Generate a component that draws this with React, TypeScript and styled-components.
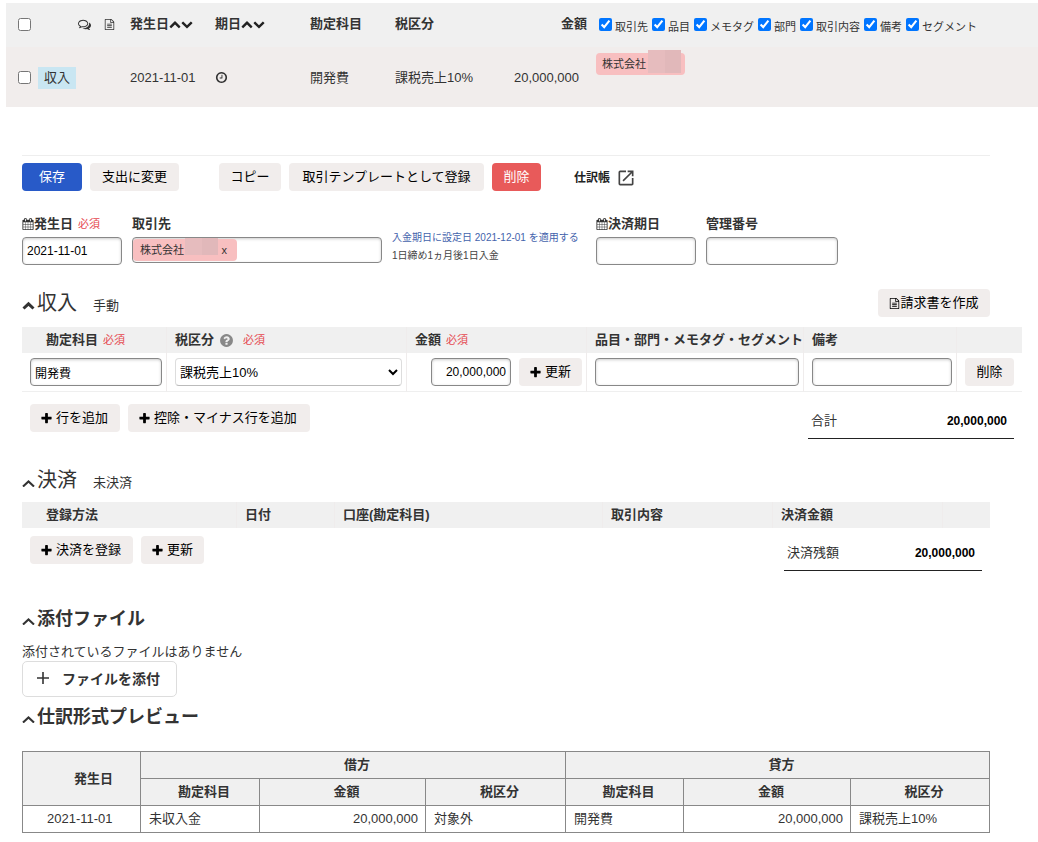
import React from 'react';
import styled, { createGlobalStyle, css } from 'styled-components';

const sans = '"Liberation Sans", "Noto Sans CJK JP", sans-serif';

const GlobalStyle = createGlobalStyle`
  *, *::before, *::after { box-sizing: border-box; }
  body {
    margin: 0;
    background: #fff;
    color: #333;
    font-family: ${sans};
    font-size: 13px;
    line-height: 20px;
  }
  button, input, select { font-family: inherit; }
  table { border-collapse: collapse; border-spacing: 0; }
  th, td { padding: 0; text-align: left; }
  h2, p { margin: 0; }
  svg { display: block; flex: none; }
`;

/* ---------- icons ---------- */

const paths = {
  up: 'M1683 1331l-166 165q-19 19-45 19t-45-19l-531-531-531 531q-19 19-45 19t-45-19l-166-165q-19-19-19-45.5t19-45.5l742-741q19-19 45-19t45 19l742 741q19 19 19 45.5t-19 45.5z',
  down: 'M1683 808l-742 741q-19 19-45 19t-45-19l-742-741q-19-19-19-45.5t19-45.5l166-165q19-19 45-19t45 19l531 531 531-531q19-19 45-19t45 19l166 165q19 19 19 45.5t-19 45.5z',
  plus: 'M1600 736v192q0 40-28 68t-68 28h-416v416q0 40-28 68t-68 28h-192q-40 0-68-28t-28-68v-416h-416q-40 0-68-28t-28-68v-192q0-40 28-68t68-28h416v-416q0-40 28-68t68-28h192q40 0 68 28t28 68v416h416q40 0 68 28t28 68z',
  clock:
    'M1024 544v448q0 14-9 23t-23 9h-320q-14 0-23-9t-9-23v-64q0-14 9-23t23-9h224v-352q0-14 9-23t23-9h64q14 0 23 9t9 23zm416 352q0-148-73-273t-198-198-273-73-273 73-198 198-73 273 73 273 198 198 273 73 273-73 198-198 73-273zm224 0q0 209-103 385.5t-279.5 279.5-385.5 103-385.5-103-279.5-279.5-103-385.5 103-385.5 279.5-279.5 385.5-103 385.5 103 279.5 279.5 103 385.5z',
  question:
    'M1024 1376v-192q0-14-9-23t-23-9h-192q-14 0-23 9t-9 23v192q0 14 9 23t23 9h192q14 0 23-9t9-23zm256-672q0-88-55.5-163t-138.5-116-170-41q-243 0-371 213-15 24 8 42l132 100q7 6 19 6 16 0 25-12 53-68 86-92 34-24 86-24 48 0 85.5 26t37.5 59q0 38-20 61t-68 45q-63 28-115.5 86.5t-52.5 125.5v36q0 14 9 23t23 9h192q14 0 23-9t9-23q0-19 21.5-49.5t54.5-49.5q32-18 49-28.5t46-35 44.5-48 28-60.5 12.5-81zm384 192q0 209-103 385.5t-279.5 279.5-385.5 103-385.5-103-279.5-279.5-103-385.5 103-385.5 279.5-279.5 385.5-103 385.5 103 279.5 279.5 103 385.5z',
  calendar:
    'M192 1664h288v-288h-288v288zm352 0h320v-288h-320v288zm-352-352h288v-320h-288v320zm352 0h320v-320h-320v320zm-352-384h288v-288h-288v288zm736 736h320v-288h-320v288zm-384-736h320v-288h-320v288zm768 736h288v-288h-288v288zm-384-352h320v-320h-320v320zm-352-864v-288q0-13-9.5-22.5t-22.5-9.5h-64q-13 0-22.5 9.5t-9.5 22.5v288q0 13 9.5 22.5t22.5 9.5h64q13 0 22.5-9.5t9.5-22.5zm736 864h288v-320h-288v320zm-384-384h320v-288h-320v288zm384 0h288v-288h-288v288zm32-480v-288q0-13-9.5-22.5t-22.5-9.5h-64q-13 0-22.5 9.5t-9.5 22.5v288q0 13 9.5 22.5t22.5 9.5h64q13 0 22.5-9.5t9.5-22.5zm384-64v1280q0 52-38 90t-90 38h-1408q-52 0-90-38t-38-90v-1280q0-52 38-90t90-38h128v-96q0-66 47-113t113-47h64q66 0 113 47t47 113v96h384v-96q0-66 47-113t113-47h64q66 0 113 47t47 113v96h128q52 0 90 38t38 90z',
  file: 'M1596 380q28 28 48 76t20 88v1152q0 40-28 68t-68 28h-1344q-40 0-68-28t-28-68v-1600q0-40 28-68t68-28h896q40 0 88 20t76 48zm-444-244v376h376q-10-29-22-41l-313-313q-12-12-41-22zm384 1528v-1024h-416q-40 0-68-28t-28-68v-416h-768v1536h1280zm-1024-864q0-14 9-23t23-9h704q14 0 23 9t9 23v64q0 14-9 23t-23 9h-704q-14 0-23-9t-9-23v-64zm736 224q14 0 23 9t9 23v64q0 14-9 23t-23 9h-704q-14 0-23-9t-9-23v-64q0-14 9-23t23-9h704zm0 256q14 0 23 9t9 23v64q0 14-9 23t-23 9h-704q-14 0-23-9t-9-23v-64q0-14 9-23t23-9h704z',
  comments:
    'M704 384q-153 0-286 52t-211.5 141-78.5 191q0 82 53 158t149 132l97 56-35 84q34-20 62-39l44-31 53 10q78 14 153 14 153 0 286-52t211.5-141 78.5-191-78.5-191-211.5-141-286-52zm0-128q191 0 353.5 68.5t256.5 186.5 94 257-94 257-256.5 186.5-353.5 68.5q-86 0-176-16-124 88-278 128-36 9-86 16h-3q-11 0-20.5-8t-11.5-21q-1-3-1-6.5t.5-6.5 2-6l2.5-5 3.5-5.5 4-5 4.5-5 4-4.5q5-6 23-25t26-29.5 22.5-29 25-38.5 20.5-44q-124-72-195-177t-71-224q0-139 94-257t256.5-186.5 353.5-68.5zm822 1169q10 24 20.5 44t25 38.5 22.5 29 26 29.5 23 25q1 1 4 4.5t4.5 5 4 5 3.5 5.5l2.5 5 2 6 .5 6.5-1 6.5q-3 14-13 22t-22 7q-50-7-86-16-154-40-278-128-90 16-176 16-271 0-472-132 58 4 88 4 161 0 309-45t264-129q125-92 192-212t67-254q0-77-23-152 129 71 204 178t75 230q0 120-71 224.5t-195 176.5z',
};

const Icon = ({ name, size = 13, color = 'currentColor' }: { name: keyof typeof paths; size?: number; color?: string }) => (
  <svg width={size} height={size} viewBox="0 0 1792 1792" fill={color} aria-hidden="true">
    <path d={paths[name]} />
  </svg>
);

const Fold = ({ heavy }: { heavy?: boolean }) => (
  <svg width="14" height="9" viewBox="0 0 14 9" fill="none" stroke="#333" strokeWidth={heavy ? 3 : 2} aria-hidden="true">
    <path d={heavy ? 'M1.5 7.5 L6.5 2.8 L11.5 7.5' : 'M1 8.6 L6.5 3.4 L12 8.6'} />
  </svg>
);

const OpenIcon = () => (
  <svg width="20" height="20" viewBox="0 0 24 24" fill="#444" aria-hidden="true">
    <path d="M19 19H5V5h7V3H5a2 2 0 0 0-2 2v14a2 2 0 0 0 2 2h14c1.1 0 2-.9 2-2v-7h-2v7zM14 3v2h3.59l-9.83 9.83 1.41 1.41L19 6.41V10h2V3h-7z" />
  </svg>
);

/* ---------- shared controls ---------- */

type Tone = 'plain' | 'primary' | 'danger';

const tones: Record<Tone, ReturnType<typeof css>> = {
  plain: css`background: #f1edec; color: #000;`,
  primary: css`background: #285ac8; color: #fff;`,
  danger: css`background: #e85a5a; color: #fff;`,
};

const Button = styled.button<{ $tone?: Tone; $w: number }>`
  display: flex;
  align-items: center;
  justify-content: center;
  flex: none;
  width: ${p => p.$w}px;
  height: 28px;
  padding: 0;
  border: 0;
  border-radius: 4px;
  font-size: 13px;
  line-height: 20px;
  white-space: nowrap;
  ${p => tones[p.$tone ?? 'plain']}
`;

const PlusButton = styled(Button)`
  justify-content: flex-start;
  gap: 3px;
  padding-left: 10px;
`;

const TextInput = styled.input<{ $w?: number; $align?: string }>`
  display: block;
  width: ${p => (p.$w ? `${p.$w}px` : '100%')};
  height: 28px;
  padding: 0 4px;
  border: 1px solid #888;
  border-radius: 4px;
  background: #fff;
  box-shadow: inset 0 1px 3px #ccc;
  color: #000;
  font-size: 12px;
  text-align: ${p => p.$align ?? 'left'};
`;

const Required = styled.span`
  color: #e5484f;
  font-size: 11px;
  font-weight: 400;
`;

const Redacted = styled.span<{ $left: number; $top: number; $h: number }>`
  position: absolute;
  left: ${p => p.$left}px;
  top: ${p => p.$top}px;
  width: 33px;
  height: ${p => p.$h}px;
  background: linear-gradient(90deg, #e6bcbe 0 50%, #e1b8ba 50% 100%);
`;

/* ---------- transaction list ---------- */

const List = styled.div`
  margin: 3px 0 0 6px;
`;

const ListTable = styled.table`
  width: 100%;
  table-layout: fixed;
  th { height: 44px; padding-bottom: 2px; background: #f0f0f0; }
  td { height: 60px; padding-top: 1px; background: #f1edec; }
`;

const Check = styled.input`
  display: block;
  flex: none;
  width: 13px;
  height: 13px;
  margin: 0;
`;

const SelectCell = styled.div`
  padding-left: 12px;
`;

const Badge = styled.span`
  display: inline-block;
  padding: 1px 6px;
  background: #c9e6f2;
`;

const Sortable = styled.div`
  display: flex;
  align-items: center;
`;

const AmountHead = styled.th`
  && { text-align: right; padding-right: 1px; }
`;

const AmountCell = styled.td`
  && { text-align: right; padding-right: 9px; }
`;

const Filters = styled.div`
  display: flex;
  align-items: center;
  gap: 4px;
  padding-left: 11px;
`;

const Filter = styled.label`
  display: flex;
  align-items: center;
  gap: 3px;
  font-size: 11px;
  font-weight: 400;
  white-space: nowrap;
  span { padding-top: 5px; }
`;

const TagCell = styled.td`
  && { vertical-align: top; padding: 6px 0 0 8px; }
`;

const Tag = styled.span`
  position: relative;
  display: block;
  width: 89px;
  height: 22px;
  padding-left: 6px;
  border-radius: 4px;
  background: #f8bfc0;
  font-size: 11px;
  line-height: 22px;
`;

/* ---------- detail form ---------- */

const Main = styled.main`
  padding: 48px 16px 9px 22px;
`;

const Narrow = styled.div`
  margin-right: 32px;
`;

const Toolbar = styled.div`
  display: flex;
  gap: 8px;
  padding-top: 7px;
  border-top: 1px solid #eee;
`;

const Gap = styled.span`
  width: 24px;
`;

const JournalLink = styled.a`
  display: flex;
  align-items: center;
  gap: 6px;
  margin-left: 25px;
  padding-top: 2px;
  color: #222;
  font-size: 12px;
  font-weight: 700;
  text-decoration: none;
`;

const Fields = styled.div`
  display: flex;
  gap: 10px;
  margin-top: 25px;
`;

const Field = styled.div<{ $w: number }>`
  width: ${p => p.$w}px;
`;

const Label = styled.label`
  display: flex;
  align-items: center;
  height: 16px;
  margin-bottom: 5px;
  font-weight: 700;
  white-space: nowrap;
  ${Required} { margin-left: 5px; }
`;

const ChipBox = styled.div`
  display: flex;
  height: 26px;
  padding: 1px 0;
  border: 1px solid #888;
  border-radius: 4px;
  box-shadow: inset 0 1px 3px #ccc;
  input { flex: 1; min-width: 0; border: 0; background: none; }
`;

const Chip = styled.span`
  position: relative;
  display: flex;
  justify-content: space-between;
  width: 104px;
  padding: 0 10px 0 7px;
  border-radius: 4px;
  background: #f8bfc0;
  font-size: 11px;
  line-height: 22px;
  button { padding: 0; border: 0; background: none; color: #333; font-size: 11px; line-height: 22px; }
`;

const Notice = styled.div`
  display: flex;
  flex-direction: column;
  width: 194px;
  padding-top: 13px;
  color: #444;
  font-size: 10px;
  line-height: 18px;
  white-space: nowrap;
  a { color: #4463ac; text-decoration: none; }
`;

const SectionHead = styled.div<{ $top: number; $gap?: number }>`
  display: flex;
  justify-content: space-between;
  align-items: center;
  height: 28px;
  margin: ${p => p.$top}px 0 ${p => p.$gap ?? 10}px;
`;

const TitleRow = styled.div`
  display: flex;
  align-items: baseline;
`;

const Title = styled.h2<{ $size: number; $bold?: boolean }>`
  display: flex;
  align-items: baseline;
  gap: 1px;
  font-size: ${p => p.$size}px;
  line-height: 26px;
  font-weight: ${p => (p.$bold ? 700 : 400)};
`;

const Status = styled.span`
  margin-left: 16px;
`;

const LineTable = styled.table`
  width: 100%;
  table-layout: fixed;
  border-collapse: separate;
  th {
    height: 26px;
    padding-left: 8px;
    background: #f0f0f0;
    border-right: 1px solid #efecec;
    white-space: nowrap;
  }
  th:first-child { padding-left: 24px; }
  td {
    padding: 5px 4px 5px 8px;
    border-right: 1px solid #efecec;
    border-bottom: 1px solid #efefef;
  }
  th:last-child, td:last-child { border-right: 0; }
`;

const HeadText = styled.div`
  display: flex;
  align-items: center;
  gap: 5px;
`;

const Help = styled.button`
  display: block;
  margin-right: 4px;
  padding: 0;
  border: 0;
  background: none;
`;

const TaxSelect = styled.select`
  display: block;
  width: 100%;
  height: 28px;
  padding: 0;
  border: 1px solid #ddd;
  border-bottom-color: #bbb;
  border-radius: 4px;
  background: #fff;
  color: #000;
  font-size: 13px;
`;

const AmountEdit = styled.div`
  display: flex;
  justify-content: flex-end;
  gap: 8px;
`;

const Footer = styled.div<{ $top: number }>`
  display: flex;
  gap: 8px;
  margin: ${p => p.$top}px 8px 0;
`;

const Total = styled.div<{ $w: number }>`
  display: flex;
  justify-content: space-between;
  align-items: center;
  width: ${p => p.$w}px;
  height: 35px;
  margin-left: auto;
  padding: 0 7px 0 3px;
  border-bottom: 1px solid #222;
  strong { color: #000; font-size: 12px; }
`;

const Empty = styled.p`
  line-height: 19px;
`;

const AttachButton = styled.button`
  display: flex;
  align-items: center;
  gap: 12px;
  width: 155px;
  height: 36px;
  padding: 0 13px 2px;
  border: 1px solid #ddd;
  border-radius: 5px;
  background: #fff;
  color: #333;
  font-size: 14px;
  font-weight: 700;
  white-space: nowrap;
`;

const Preview = styled.table`
  width: 100%;
  table-layout: fixed;
  th, td {
    height: 27px;
    padding-left: 8px;
    border: 1px solid #888;
  }
  th { background: #f0f0f0; text-align: center; }
  tr:first-child th:first-child, td:first-child { padding-left: 24px; }
`;

const NumberCell = styled.td`
  && { text-align: right; padding-right: 7px; }
`;

const filters = ['取引先', '品目', 'メモタグ', '部門', '取引内容', '備考', 'セグメント'];

const SortHead = ({ children }: { children: React.ReactNode }) => (
  <Sortable>
    {children}
    <Icon name="up" size={12} color="#222" />
    <Icon name="down" size={12} color="#222" />
  </Sortable>
);

const Cols = ({ widths }: { widths: (number | null)[] }) => (
  <colgroup>
    {widths.map((w, i) => (
      <col key={i} width={w ?? undefined} />
    ))}
  </colgroup>
);

export default function App() {
  return (
    <>
      <GlobalStyle />
      <List>
        <ListTable>
          <Cols widths={[32, 40, 26, 26, 85, 95, 85, 85, 108, null]} />
          <thead>
            <tr>
              <th><SelectCell><Check type="checkbox" aria-label="すべて選択" /></SelectCell></th>
              <th />
              <th><Icon name="comments" size={13} /></th>
              <th><Icon name="file" size={11} /></th>
              <th><SortHead>発生日</SortHead></th>
              <th><SortHead>期日</SortHead></th>
              <th>勘定科目</th>
              <th>税区分</th>
              <AmountHead>金額</AmountHead>
              <th>
                <Filters>
                  {filters.map(f => (
                    <Filter key={f}>
                      <Check type="checkbox" defaultChecked />
                      <span>{f}</span>
                    </Filter>
                  ))}
                </Filters>
              </th>
            </tr>
          </thead>
          <tbody>
            <tr>
              <td><SelectCell><Check type="checkbox" aria-label="選択" /></SelectCell></td>
              <td><Badge>収入</Badge></td>
              <td />
              <td />
              <td>2021-11-01</td>
              <td><Icon name="clock" size={13} /></td>
              <td>開発費</td>
              <td>課税売上10%</td>
              <AmountCell>20,000,000</AmountCell>
              <TagCell>
                <Tag>株式会社<Redacted $left={52} $top={-3} $h={23} /></Tag>
              </TagCell>
            </tr>
          </tbody>
        </ListTable>
      </List>

      <Main>
        <Narrow>
          <Toolbar>
            <Button $w={60} $tone="primary">保存</Button>
            <Button $w={89}>支出に変更</Button>
            <Gap />
            <Button $w={62}>コピー</Button>
            <Button $w={195}>取引テンプレートとして登録</Button>
            <Button $w={49} $tone="danger">削除</Button>
            <JournalLink href="#journal">仕訳帳<OpenIcon /></JournalLink>
          </Toolbar>

          <Fields>
            <Field $w={100}>
              <Label htmlFor="date"><Icon name="calendar" size={12} />発生日<Required>必須</Required></Label>
              <TextInput id="date" defaultValue="2021-11-01" />
            </Field>
            <Field $w={250}>
              <Label htmlFor="partner">取引先</Label>
              <ChipBox>
                <Chip>
                  株式会社
                  <Redacted $left={52} $top={-1} $h={17} />
                  <button aria-label="取引先を外す">x</button>
                </Chip>
                <input id="partner" />
              </ChipBox>
            </Field>
            <Notice>
              <a href="#due">入金期日に設定日 2021-12-01 を適用する</a>
              <span>1日締め1ヵ月後1日入金</span>
            </Notice>
            <Field $w={100}>
              <Label htmlFor="due"><Icon name="calendar" size={12} />決済期日</Label>
              <TextInput id="due" />
            </Field>
            <Field $w={132}>
              <Label htmlFor="number">管理番号</Label>
              <TextInput id="number" />
            </Field>
          </Fields>

          <SectionHead $top={24}>
            <TitleRow>
              <Title $size={20}><Fold heavy />収入</Title>
              <Status>手動</Status>
            </TitleRow>
            <Button $w={112}><Icon name="file" size={11} />請求書を作成</Button>
          </SectionHead>
        </Narrow>

        <LineTable>
          <Cols widths={[145, 240, 180, null, 153, 65]} />
          <thead>
            <tr>
              <th><HeadText>勘定科目<Required>必須</Required></HeadText></th>
              <th>
                <HeadText>
                  税区分
                  <Help aria-label="税区分について"><Icon name="question" size={15} color="#888" /></Help>
                  <Required>必須</Required>
                </HeadText>
              </th>
              <th><HeadText>金額<Required>必須</Required></HeadText></th>
              <th>品目・部門・メモタグ・セグメント</th>
              <th>備考</th>
              <th />
            </tr>
          </thead>
          <tbody>
            <tr>
              <td><TextInput aria-label="勘定科目" defaultValue="開発費" /></td>
              <td>
                <TaxSelect aria-label="税区分">
                  <option>課税売上10%</option>
                </TaxSelect>
              </td>
              <td>
                <AmountEdit>
                  <TextInput aria-label="金額" $w={80} $align="right" defaultValue="20,000,000" />
                  <PlusButton $w={63}><Icon name="plus" />更新</PlusButton>
                </AmountEdit>
              </td>
              <td><TextInput aria-label="品目・部門・メモタグ・セグメント" /></td>
              <td><TextInput aria-label="備考" /></td>
              <td><Button $w={49}>削除</Button></td>
            </tr>
          </tbody>
        </LineTable>
        <Footer $top={12}>
          <PlusButton $w={90}><Icon name="plus" />行を追加</PlusButton>
          <PlusButton $w={182}><Icon name="plus" />控除・マイナス行を追加</PlusButton>
          <Total $w={206}>合計<strong>20,000,000</strong></Total>
        </Footer>

        <Narrow>
          <SectionHead $top={27} $gap={8}>
            <TitleRow>
              <Title $size={20}><Fold />決済</Title>
              <Status>未決済</Status>
            </TitleRow>
          </SectionHead>
          <LineTable>
            <Cols widths={[215, 98, null, 170, 170, 47]} />
            <thead>
              <tr>
                <th>登録方法</th>
                <th>日付</th>
                <th>口座(勘定科目)</th>
                <th>取引内容</th>
                <th>決済金額</th>
                <th />
              </tr>
            </thead>
          </LineTable>
          <Footer $top={8}>
            <PlusButton $w={103}><Icon name="plus" />決済を登録</PlusButton>
            <PlusButton $w={63}><Icon name="plus" />更新</PlusButton>
            <Total $w={198}>決済残額<strong>20,000,000</strong></Total>
          </Footer>

          <SectionHead $top={34} $gap={9}>
            <Title $size={18} $bold><Fold />添付ファイル</Title>
          </SectionHead>
          <Empty>添付されているファイルはありません</Empty>
          <AttachButton>
            <svg width="14" height="14" viewBox="0 0 14 14" stroke="#333" strokeWidth="1.6" aria-hidden="true">
              <path d="M7 1v12M1 7h12" />
            </svg>
            ファイルを添付
          </AttachButton>

          <SectionHead $top={6} $gap={20}>
            <Title $size={18} $bold><Fold />仕訳形式プレビュー</Title>
          </SectionHead>
          <Preview>
            <Cols widths={[118, 119, 166, 140, 118, 167, 139]} />
            <thead>
              <tr>
                <th rowSpan={2}>発生日</th>
                <th colSpan={3}>借方</th>
                <th colSpan={3}>貸方</th>
              </tr>
              <tr>
                <th>勘定科目</th>
                <th>金額</th>
                <th>税区分</th>
                <th>勘定科目</th>
                <th>金額</th>
                <th>税区分</th>
              </tr>
            </thead>
            <tbody>
              <tr>
                <td>2021-11-01</td>
                <td>未収入金</td>
                <NumberCell>20,000,000</NumberCell>
                <td>対象外</td>
                <td>開発費</td>
                <NumberCell>20,000,000</NumberCell>
                <td>課税売上10%</td>
              </tr>
            </tbody>
          </Preview>
        </Narrow>
      </Main>
    </>
  );
}
